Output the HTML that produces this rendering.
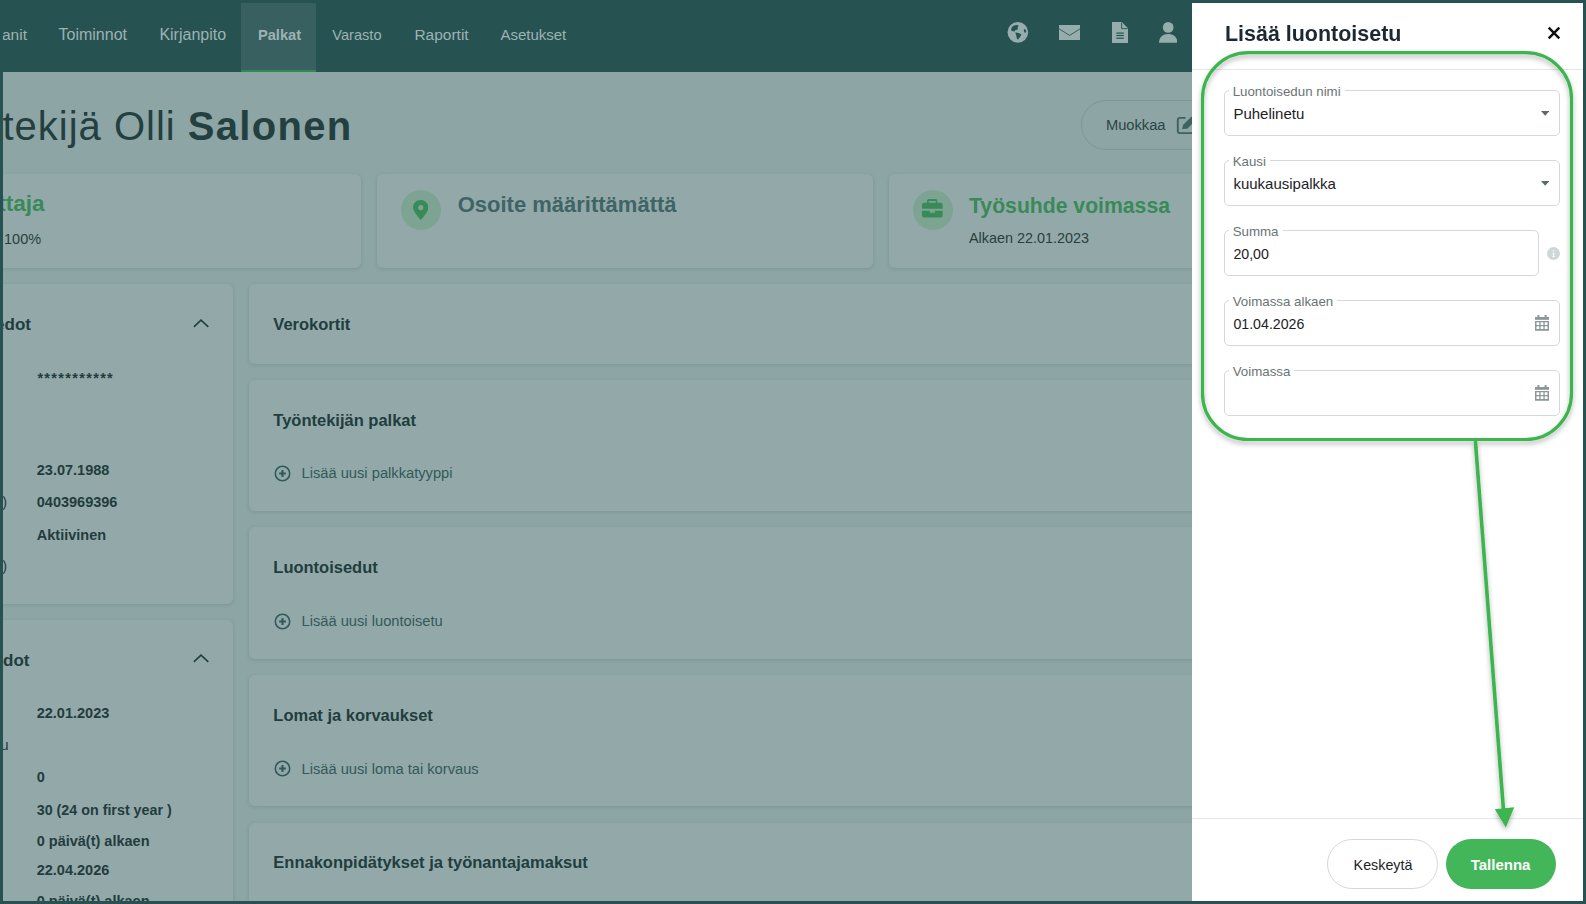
<!DOCTYPE html>
<html><head><meta charset="utf-8"><title>Lisää luontoisetu</title>
<style>
html,body{margin:0;padding:0;width:1586px;height:904px;overflow:hidden;background:#8da5a5}
body{position:relative;font-family:"Liberation Sans", sans-serif}
.t{position:absolute;white-space:pre}
</style></head><body>
<div style="position:absolute;left:0px;top:0px;width:1586px;height:904px;background:#8da5a5"></div>
<div style="position:absolute;left:0px;top:0px;width:1586px;height:72px;background:#275252"></div>
<div style="position:absolute;left:241px;top:3px;width:75px;height:69px;background:#396060"></div>
<div style="position:absolute;left:241px;top:70px;width:75px;height:2px;background:#2f8a50"></div>
<div class="t" style="right:1559px;top:27.18px;font-size:15.5px;line-height:15.5px;font-weight:400;color:#9db3b3;">anit</div>
<div class="t" style="left:58.5px;top:26.76px;font-size:16px;line-height:16px;font-weight:400;color:#9db3b3;">Toiminnot</div>
<div class="t" style="left:159.4px;top:26.76px;font-size:16px;line-height:16px;font-weight:400;color:#9db3b3;">Kirjanpito</div>
<div class="t" style="left:257.9px;top:27.86px;font-size:14.7px;line-height:14.7px;font-weight:700;color:#9db3b3;">Palkat</div>
<div class="t" style="left:332.3px;top:27.94px;font-size:14.6px;line-height:14.6px;font-weight:400;color:#9db3b3;">Varasto</div>
<div class="t" style="left:414.4px;top:27.18px;font-size:15.5px;line-height:15.5px;font-weight:400;color:#9db3b3;">Raportit</div>
<div class="t" style="left:500.4px;top:27.10px;font-size:15px;line-height:15px;font-weight:400;color:#9db3b3;">Asetukset</div>
<svg style="position:absolute;left:1007px;top:22px" width="22" height="22" viewBox="0 0 22 22">
<circle cx="10.85" cy="10.35" r="10.3" fill="#97adad"/>
<path d="M4.1 7.4 C4.2 5.4 6 3.8 8 3.3 L10 2.9 L11.6 3.2 L10.6 5.4 L11 7.5 L8.6 7.9 L7.3 9.5 L4.8 9.1 Z" fill="#275252"/>
<path d="M8.2 10.4 L11.5 10.9 L14.4 12.3 L13.2 14.7 L11 17.5 L10 16.9 L9.2 13.2 Z" fill="#275252"/>
<ellipse cx="18" cy="8.9" rx="1.1" ry="2" transform="rotate(-15 18 8.9)" fill="#275252"/>
</svg>
<svg style="position:absolute;left:1059.2px;top:24.9px" width="21.2" height="15.2" viewBox="0 0 21.2 15.2">
<rect x="0" y="0" width="21.2" height="15.2" fill="#97adad"/>
<path d="M0.2 3.9 L10.6 10.4 L21 3.9" fill="none" stroke="#275252" stroke-width="0.85"/>
</svg>
<svg style="position:absolute;left:1111.9px;top:22px" width="16.2" height="21" viewBox="0 0 16.2 21">
<path d="M0 0 H9.8 L16.2 6.4 V21 H0 Z" fill="#97adad"/>
<path d="M9.6 0.6 V6.6 H15.6" fill="none" stroke="#275252" stroke-width="0.9"/>
<rect x="4.4" y="10.5" width="7.4" height="1.2" fill="#275252"/>
<rect x="4.4" y="12.9" width="7.4" height="1.2" fill="#275252"/>
<rect x="4.4" y="15.6" width="7.4" height="1.2" fill="#275252"/>
</svg>
<svg style="position:absolute;left:1158.5px;top:22px" width="18.4" height="21" viewBox="0 0 18.4 21">
<circle cx="9.2" cy="5.4" r="5.35" fill="#97adad"/>
<path d="M0 20.8 C0 15 4 11.9 9.2 11.9 C14.4 11.9 18.4 15 18.4 20.8 Z" fill="#97adad"/>
</svg>
<div class="t" style="right:1398.2px;top:105.64px;font-size:40px;line-height:40px;font-weight:400;color:#233f40;letter-spacing:1px">Työntekijä Olli </div>
<div class="t" style="left:187.8px;top:105.64px;font-size:40px;line-height:40px;font-weight:700;color:#233f40;letter-spacing:1.3px">Salonen</div>
<div style="position:absolute;left:1081px;top:100.2px;width:140px;height:49.5px;border:1px solid #7d9797;border-radius:25px;box-sizing:border-box"></div>
<div class="t" style="left:1105.9px;top:118.16px;font-size:14.7px;line-height:14.7px;font-weight:400;color:#2a4646;">Muokkaa</div>
<svg style="position:absolute;left:1176.4px;top:116px" width="20" height="19" viewBox="0 0 20 19"><path d="M9.6 1.9 H3.9 Q1.8 1.9 1.8 4 V15 Q1.8 17.1 3.9 17.1 H18" fill="none" stroke="#3f6162" stroke-width="1.9"/><path d="M6 12.9 L7.2 8.8 L15.6 0.4 L19.6 4.4 L11.2 12.8 Z" fill="#3f6162"/></svg>
<div style="position:absolute;left:-20px;top:174px;width:381px;height:94px;background:#93a9a9;border-radius:6px;box-shadow:0 1px 4px rgba(30,60,60,0.14)"></div>
<div style="position:absolute;left:377px;top:174px;width:496px;height:94px;background:#93a9a9;border-radius:6px;box-shadow:0 1px 4px rgba(30,60,60,0.14)"></div>
<div style="position:absolute;left:889px;top:174px;width:320px;height:94px;background:#93a9a9;border-radius:6px;box-shadow:0 1px 4px rgba(30,60,60,0.14)"></div>
<div class="t" style="right:1541.5px;top:193.35px;font-size:22.5px;line-height:22.5px;font-weight:700;color:#388a58;">ottaja</div>
<div class="t" style="left:4px;top:231.73px;font-size:14.5px;line-height:14.5px;font-weight:400;color:#283f40;">100%</div>
<div style="position:absolute;left:401px;top:190px;width:40px;height:40px;background:#7da493;border-radius:50%"></div>
<svg style="position:absolute;left:412.9px;top:199.9px" width="15.5" height="20.1" viewBox="0 0 15.5 20.1">
<path d="M7.75 20.1 C7.75 20.1 0 11.8 0 7.6 C0 3.4 3.5 0 7.75 0 C12 0 15.5 3.4 15.5 7.6 C15.5 11.8 7.75 20.1 7.75 20.1 Z" fill="#388a58"/>
<circle cx="7.75" cy="7.6" r="2.6" fill="#7da493"/>
</svg>
<div class="t" style="left:457.7px;top:193.68px;font-size:22px;line-height:22px;font-weight:700;color:#3f6465;">Osoite määrittämättä</div>
<div style="position:absolute;left:913px;top:190px;width:40px;height:40px;background:#7da493;border-radius:50%"></div>
<svg style="position:absolute;left:922.3px;top:199.3px" width="21" height="19" viewBox="0 0 21 19">
<path d="M5 3.9 V1.8 Q5 0 6.8 0 H13.6 Q15.4 0 15.4 1.8 V3.9 H13.7 V2.1 H6.7 V3.9 Z" fill="#388a58"/>
<path d="M0 5.8 Q0 3.8 2 3.8 H18.6 Q20.6 3.8 20.6 5.8 V9.7 H0 Z" fill="#388a58"/>
<path d="M0 11.7 H7.7 V13.7 H12.8 V11.7 H20.6 V16.6 Q20.6 18.6 18.6 18.6 H2 Q0 18.6 0 16.6 Z" fill="#388a58"/>
</svg>
<div class="t" style="left:969px;top:195.15px;font-size:21.2px;line-height:21.2px;font-weight:700;color:#388a58;">Työsuhde voimassa</div>
<div class="t" style="left:969px;top:231.21px;font-size:14.4px;line-height:14.4px;font-weight:400;color:#283f40;">Alkaen 22.01.2023</div>
<div style="position:absolute;left:-20px;top:284px;width:253px;height:320px;background:#93a9a9;border-radius:6px;box-shadow:0 1px 4px rgba(30,60,60,0.14)"></div>
<div style="position:absolute;left:-20px;top:620px;width:253px;height:320px;background:#93a9a9;border-radius:6px;box-shadow:0 1px 4px rgba(30,60,60,0.14)"></div>
<div class="t" style="right:1555px;top:315.61px;font-size:17px;line-height:17px;font-weight:700;color:#213d3e;">Henkilötiedot</div>
<div class="t" style="right:1556.5px;top:652.21px;font-size:17px;line-height:17px;font-weight:700;color:#213d3e;">Työsuhdetiedot</div>
<svg style="position:absolute;left:192.6px;top:318.8px" width="16" height="9" viewBox="0 0 16 9"><path d="M0.9 7.9 L8 1.1 L15.3 7.9" fill="none" stroke="#213d3e" stroke-width="1.5"/></svg>
<svg style="position:absolute;left:192.6px;top:653.5px" width="16" height="9" viewBox="0 0 16 9"><path d="M0.9 7.9 L8 1.1 L15.3 7.9" fill="none" stroke="#213d3e" stroke-width="1.5"/></svg>
<div class="t" style="left:37.4px;top:370.73px;font-size:14.5px;line-height:14.5px;font-weight:700;color:#233c3d;letter-spacing:1.33px">***********</div>
<div class="t" style="left:36.8px;top:463.33px;font-size:14.5px;line-height:14.5px;font-weight:700;color:#233c3d;">23.07.1988</div>
<div class="t" style="left:36.8px;top:494.93px;font-size:14.5px;line-height:14.5px;font-weight:700;color:#233c3d;">0403969396</div>
<div class="t" style="left:36.8px;top:527.73px;font-size:14.5px;line-height:14.5px;font-weight:700;color:#233c3d;">Aktiivinen</div>
<div class="t" style="right:1579px;top:495.23px;font-size:14.5px;line-height:14.5px;font-weight:400;color:#233c3d;">Puhelin (työ)</div>
<div class="t" style="right:1579px;top:559.23px;font-size:14.5px;line-height:14.5px;font-weight:400;color:#233c3d;">Sähköposti (työ)</div>
<div class="t" style="left:36.7px;top:706.23px;font-size:14.5px;line-height:14.5px;font-weight:700;color:#233c3d;">22.01.2023</div>
<div class="t" style="right:1577.5px;top:738.33px;font-size:14.5px;line-height:14.5px;font-weight:400;color:#233c3d;">Lomapalkkasääntö tu</div>
<div class="t" style="left:36.7px;top:770.13px;font-size:14.5px;line-height:14.5px;font-weight:700;color:#233c3d;">0</div>
<div class="t" style="left:36.7px;top:802.70px;font-size:14.3px;line-height:14.3px;font-weight:700;color:#233c3d;">30 (24 on first year )</div>
<div class="t" style="left:36.7px;top:834.43px;font-size:14.5px;line-height:14.5px;font-weight:700;color:#233c3d;">0 päivä(t) alkaen</div>
<div class="t" style="left:36.7px;top:862.53px;font-size:14.5px;line-height:14.5px;font-weight:700;color:#233c3d;">22.04.2026</div>
<div class="t" style="left:36.7px;top:893.73px;font-size:14.5px;line-height:14.5px;font-weight:700;color:#233c3d;">0 päivä(t) alkaen</div>
<div style="position:absolute;left:249px;top:284px;width:1000px;height:80px;background:#93a9a9;border-radius:6px;box-shadow:0 1px 4px rgba(30,60,60,0.14)"></div>
<div class="t" style="left:273.3px;top:315.53px;font-size:16.5px;line-height:16.5px;font-weight:700;color:#213d3e;">Verokortit</div>
<div style="position:absolute;left:249px;top:380px;width:1000px;height:131px;background:#93a9a9;border-radius:6px;box-shadow:0 1px 4px rgba(30,60,60,0.14)"></div>
<div class="t" style="left:273.3px;top:411.93px;font-size:16.5px;line-height:16.5px;font-weight:700;color:#213d3e;">Työntekijän palkat</div>
<svg style="position:absolute;left:273.8px;top:464.7px" width="17" height="17" viewBox="0 0 17 17"><circle cx="8.5" cy="8.5" r="7.2" fill="none" stroke="#32595a" stroke-width="1.6"/><path d="M8.5 5.1 V11.9 M5.1 8.5 H11.9" stroke="#32595a" stroke-width="2.1"/></svg>
<div class="t" style="left:301.5px;top:466.16px;font-size:14.7px;line-height:14.7px;font-weight:400;color:#32595a;">Lisää uusi palkkatyyppi</div>
<div style="position:absolute;left:249px;top:526.5px;width:1000px;height:132px;background:#93a9a9;border-radius:6px;box-shadow:0 1px 4px rgba(30,60,60,0.14)"></div>
<div class="t" style="left:273.3px;top:558.73px;font-size:16.5px;line-height:16.5px;font-weight:700;color:#213d3e;">Luontoisedut</div>
<svg style="position:absolute;left:273.8px;top:612.9px" width="17" height="17" viewBox="0 0 17 17"><circle cx="8.5" cy="8.5" r="7.2" fill="none" stroke="#32595a" stroke-width="1.6"/><path d="M8.5 5.1 V11.9 M5.1 8.5 H11.9" stroke="#32595a" stroke-width="2.1"/></svg>
<div class="t" style="left:301.5px;top:614.26px;font-size:14.7px;line-height:14.7px;font-weight:400;color:#32595a;">Lisää uusi luontoisetu</div>
<div style="position:absolute;left:249px;top:675.3px;width:1000px;height:131px;background:#93a9a9;border-radius:6px;box-shadow:0 1px 4px rgba(30,60,60,0.14)"></div>
<div class="t" style="left:273.3px;top:706.83px;font-size:16.5px;line-height:16.5px;font-weight:700;color:#213d3e;">Lomat ja korvaukset</div>
<svg style="position:absolute;left:273.8px;top:759.9px" width="17" height="17" viewBox="0 0 17 17"><circle cx="8.5" cy="8.5" r="7.2" fill="none" stroke="#32595a" stroke-width="1.6"/><path d="M8.5 5.1 V11.9 M5.1 8.5 H11.9" stroke="#32595a" stroke-width="2.1"/></svg>
<div class="t" style="left:301.5px;top:761.56px;font-size:14.7px;line-height:14.7px;font-weight:400;color:#32595a;">Lisää uusi loma tai korvaus</div>
<div style="position:absolute;left:249px;top:822.5px;width:1000px;height:200px;background:#93a9a9;border-radius:6px;box-shadow:0 1px 4px rgba(30,60,60,0.14)"></div>
<div class="t" style="left:273.3px;top:853.53px;font-size:16.5px;line-height:16.5px;font-weight:700;color:#213d3e;">Ennakonpidätykset ja työnantajamaksut</div>
<div style="position:absolute;left:1192px;top:3px;width:391px;height:898px;background:#fff"></div>
<div class="t" style="left:1225px;top:22.78px;font-size:22px;line-height:22px;font-weight:700;color:#1c2833;transform:scaleX(0.975);transform-origin:0 0">Lisää luontoisetu</div>
<svg style="position:absolute;left:1547px;top:26.3px" width="14" height="14" viewBox="0 0 14 14"><path d="M1.7 1.7 L12.3 12.3 M12.3 1.7 L1.7 12.3" stroke="#111" stroke-width="2.5"/></svg>
<div style="position:absolute;left:1192px;top:69px;width:391px;height:1px;background:#e3e7e8"></div>
<div style="position:absolute;left:1224px;top:90px;width:336px;height:46px;border:1px solid #d3d9da;border-radius:5px;box-sizing:border-box"></div>
<div class="t" style="left:1228.7px;top:84.74px;font-size:13.3px;line-height:13.3px;font-weight:400;color:#6a7474;background:#fff;padding:0 4px">Luontoisedun nimi</div>
<div class="t" style="left:1233.4px;top:105.60px;font-size:15px;line-height:15px;font-weight:400;color:#1d2126;">Puhelinetu</div>
<svg style="position:absolute;left:1540.8px;top:111.2px" width="8.4" height="5" viewBox="0 0 8.4 5"><path d="M0 0 H8.4 L4.2 4.8 Z" fill="#5e6a6a"/></svg>
<div style="position:absolute;left:1224px;top:160px;width:336px;height:46px;border:1px solid #d3d9da;border-radius:5px;box-sizing:border-box"></div>
<div class="t" style="left:1228.7px;top:154.74px;font-size:13.3px;line-height:13.3px;font-weight:400;color:#6a7474;background:#fff;padding:0 4px">Kausi</div>
<div class="t" style="left:1233.4px;top:175.60px;font-size:15px;line-height:15px;font-weight:400;color:#1d2126;">kuukausipalkka</div>
<svg style="position:absolute;left:1540.8px;top:181.2px" width="8.4" height="5" viewBox="0 0 8.4 5"><path d="M0 0 H8.4 L4.2 4.8 Z" fill="#5e6a6a"/></svg>
<div style="position:absolute;left:1224px;top:230px;width:315px;height:46px;border:1px solid #d3d9da;border-radius:5px;box-sizing:border-box"></div>
<div class="t" style="left:1228.7px;top:224.74px;font-size:13.3px;line-height:13.3px;font-weight:400;color:#6a7474;background:#fff;padding:0 4px">Summa</div>
<div class="t" style="left:1233.4px;top:246.98px;font-size:14.2px;line-height:14.2px;font-weight:400;color:#1d2126;">20,00</div>
<svg style="position:absolute;left:1546.8px;top:246.6px" width="13" height="13" viewBox="0 0 13 13"><circle cx="6.5" cy="6.5" r="6.5" fill="#cfd6d8"/><rect x="5.9" y="5.6" width="1.3" height="4" fill="#fff"/><rect x="5.3" y="9.2" width="2.5" height="0.9" fill="#fff"/><circle cx="6.5" cy="3.7" r="0.8" fill="#fff"/></svg>
<div style="position:absolute;left:1224px;top:300px;width:336px;height:46px;border:1px solid #d3d9da;border-radius:5px;box-sizing:border-box"></div>
<div class="t" style="left:1228.7px;top:294.74px;font-size:13.3px;line-height:13.3px;font-weight:400;color:#6a7474;background:#fff;padding:0 4px">Voimassa alkaen</div>
<div class="t" style="left:1233.4px;top:316.98px;font-size:14.2px;line-height:14.2px;font-weight:400;color:#1d2126;">01.04.2026</div>
<svg style="position:absolute;left:1535px;top:315px" width="14" height="16" viewBox="0 0 14 16">
<rect x="2.4" y="0" width="2" height="3" fill="#8c9797"/><rect x="9.6" y="0" width="2" height="3" fill="#8c9797"/>
<rect x="0" y="2" width="14" height="2.8" fill="#8c9797"/>
<path d="M0 5.9 H14 V15.7 H0 Z M1.5 7.2 V10.1 H4.3 V7.2 Z M5.6 7.2 V10.1 H8.4 V7.2 Z M9.7 7.2 V10.1 H12.5 V7.2 Z M1.5 11.2 V14.1 H4.3 V11.2 Z M5.6 11.2 V14.1 H8.4 V11.2 Z M9.7 11.2 V14.1 H12.5 V11.2 Z" fill="#8c9797" fill-rule="evenodd"/>
</svg>
<div style="position:absolute;left:1224px;top:370px;width:336px;height:46px;border:1px solid #d3d9da;border-radius:5px;box-sizing:border-box"></div>
<div class="t" style="left:1228.7px;top:364.74px;font-size:13.3px;line-height:13.3px;font-weight:400;color:#6a7474;background:#fff;padding:0 4px">Voimassa</div>
<svg style="position:absolute;left:1535px;top:385px" width="14" height="16" viewBox="0 0 14 16">
<rect x="2.4" y="0" width="2" height="3" fill="#8c9797"/><rect x="9.6" y="0" width="2" height="3" fill="#8c9797"/>
<rect x="0" y="2" width="14" height="2.8" fill="#8c9797"/>
<path d="M0 5.9 H14 V15.7 H0 Z M1.5 7.2 V10.1 H4.3 V7.2 Z M5.6 7.2 V10.1 H8.4 V7.2 Z M9.7 7.2 V10.1 H12.5 V7.2 Z M1.5 11.2 V14.1 H4.3 V11.2 Z M5.6 11.2 V14.1 H8.4 V11.2 Z M9.7 11.2 V14.1 H12.5 V11.2 Z" fill="#8c9797" fill-rule="evenodd"/>
</svg>
<div style="position:absolute;left:1192px;top:818px;width:391px;height:1px;background:#e3e7e8"></div>
<div style="position:absolute;left:1327px;top:839px;width:111px;height:50px;border:1px solid #d2dadb;border-radius:25px;box-sizing:border-box"></div>
<div class="t" style="left:1353.6px;top:857.90px;font-size:14.3px;line-height:14.3px;font-weight:400;color:#1d2126;">Keskeytä</div>
<div style="position:absolute;left:1446px;top:839px;width:110px;height:50px;background:#43b65a;border-radius:25px"></div>
<div class="t" style="left:1470.7px;top:857.30px;font-size:15px;line-height:15px;font-weight:700;color:#fff;">Tallenna</div>
<svg style="position:absolute;left:0;top:0" width="1586" height="904" viewBox="0 0 1586 904">
<defs><filter id="sh" x="-10%" y="-10%" width="120%" height="120%"><feDropShadow dx="0" dy="3" stdDeviation="2.5" flood-color="#000" flood-opacity="0.3"/></filter></defs>
<g filter="url(#sh)">
<rect x="1202.5" y="52.6" width="369" height="386.9" rx="46" ry="46" fill="none" stroke="#3cb54f" stroke-width="3.2"/>
<path d="M1475.4 441 L1503.6 812" stroke="#3cb54f" stroke-width="3.6" fill="none"/>
<path d="M1494.8 809.3 L1514.2 807.3 L1505.8 827.4 Z" fill="#3cb54f"/>
</g>
</svg>
<div style="position:absolute;left:0px;top:0px;width:1586px;height:3px;background:#275252"></div>
<div style="position:absolute;left:0px;top:901px;width:1586px;height:3px;background:#275252"></div>
<div style="position:absolute;left:0px;top:0px;width:3px;height:904px;background:#275252"></div>
<div style="position:absolute;left:1583px;top:0px;width:3px;height:904px;background:#275252"></div>
</body></html>
